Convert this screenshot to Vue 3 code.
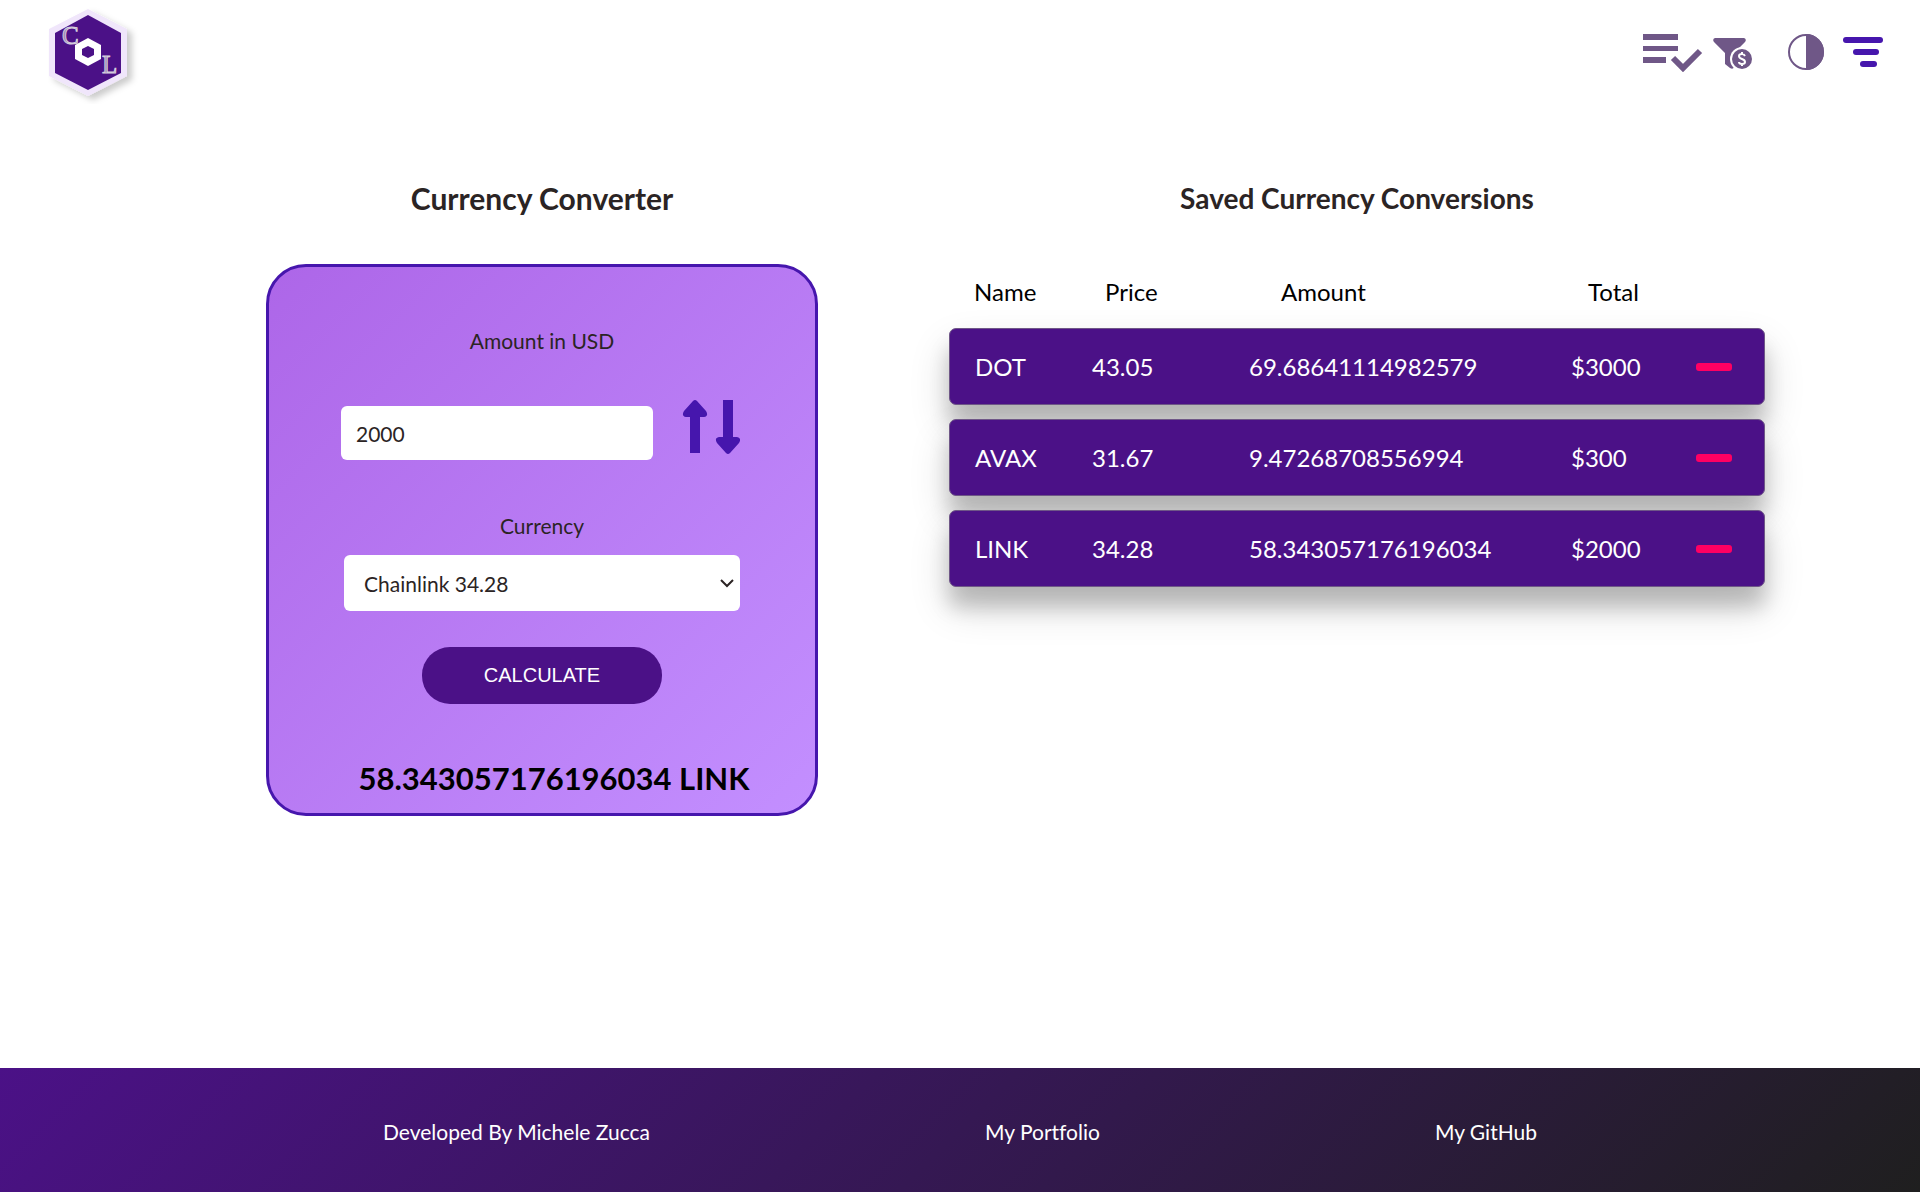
<script setup>
import { ref } from 'vue'

const amount = ref('2000')
const currency = ref('Chainlink 34.28')
const result = ref('58.343057176196034 LINK')
const conversions = ref([
  { name: 'DOT', price: '43.05', amount: '69.68641114982579', total: '$3000' },
  { name: 'AVAX', price: '31.67', amount: '9.47268708556994', total: '$300' },
  { name: 'LINK', price: '34.28', amount: '58.343057176196034', total: '$2000' },
])

function calculate() {
  const price = Number(currency.value.split(' ').pop())
  result.value = `${Number(amount.value) / price} LINK`
}

function remove(index) {
  conversions.value.splice(index, 1)
}
</script>

<template>
  <div class="page">
    <header class="topbar">
      <a href="#" class="logo" aria-label="Home">
        <svg width="94" height="104" viewBox="0 0 94 104">
          <defs>
            <filter id="logo-shadow" x="-20%" y="-20%" width="150%" height="150%">
              <feDropShadow dx="5" dy="4" stdDeviation="3" flood-color="#000" flood-opacity="0.2" />
            </filter>
          </defs>
          <polygon points="40,9 79,29 79,76 40,96 1,76 1,29" fill="#f0e6fb" filter="url(#logo-shadow)" />
          <polygon points="40,15 73,33 73,73 40,90 7,73 7,33" fill="#4b1187" />
          <polygon points="40,38 53,45 53,59 40,66 27,59 27,45" fill="#fff" />
          <polygon points="40,46 46,49 46,55 40,58 34,55 34,49" fill="#4b1187" />
          <g font-family="'Liberation Serif', serif" font-size="25" fill="#9a86b4" stroke="#d4ccdc" stroke-width="1">
            <text x="14" y="44">C</text>
            <text x="54" y="73">L</text>
          </g>
        </svg>
      </a>
      <nav class="tools" aria-label="Tools">
        <button type="button" aria-label="Saved list">
          <svg width="60" height="40" viewBox="0 0 60 40" fill="#6f5787">
            <path d="M0 2h35v6H0zM0 14h35v5H0zM0 25h23v6H0z" />
            <path d="M30 26l10 10 17-17" fill="none" stroke="#6f5787" stroke-width="6" />
          </svg>
        </button>
        <button type="button" class="filter" aria-label="Filter by price">
          <svg width="40" height="36" viewBox="0 0 40 36">
            <g transform="translate(0 4)">
              <path d="M2 0h29q3 1 1 4L21 15v14q-1 3-4 1l-5-4V15L1 4Q-1 1 2 0z" fill="#6f5787" />
              <circle cx="29" cy="21" r="12" fill="#fff" />
              <circle cx="29" cy="21" r="10" fill="#6f5787" />
              <path d="M32 18q-1-2-3-2-3 0-3 2t3 3q3 1 3 3t-3 2q-3 0-3-2M29 14v2M29 26v2" fill="none" stroke="#fff" stroke-width="2" />
            </g>
          </svg>
        </button>
        <button type="button" class="contrast" aria-label="Toggle theme">
          <svg width="36" height="36" viewBox="0 0 36 36">
            <circle cx="18" cy="18" r="17" fill="none" stroke="#6f5787" stroke-width="2" />
            <path d="M18 0a18 18 0 0 1 0 36z" fill="#6f5787" />
          </svg>
        </button>
        <button type="button" class="menu" aria-label="Menu">
          <svg width="40" height="30" viewBox="0 0 40 30" fill="#4616ad">
            <rect width="40" height="6" rx="3" />
            <rect x="10" y="12" width="26" height="6" rx="3" />
            <rect x="17" y="24" width="17" height="6" rx="3" />
          </svg>
        </button>
      </nav>
    </header>

    <main class="content">
      <section class="converter">
        <h2>Currency Converter</h2>
        <form class="card" @submit.prevent="calculate">
          <label for="amount">Amount in USD</label>
          <div class="amount-row">
            <input id="amount" v-model="amount" type="text" inputmode="decimal" />
            <button type="button" class="swap" aria-label="Swap direction">
              <svg width="58" height="58" viewBox="0 0 58 58" fill="#4616ad">
                <path d="M8 53V17H4q-5-1-2-6L11 1q2-2 4 0l9 10q3 5-2 6h-4v36z" />
                <path d="M41 0v37h-4q-5 1-2 6l9 10q2 2 4 0l9-10q3-5-2-6h-4V0z" />
              </svg>
            </button>
          </div>
          <label for="currency">Currency</label>
          <div class="select-wrap">
            <select id="currency" v-model="currency">
              <option>Chainlink 34.28</option>
            </select>
            <svg class="chevron" width="14" height="10" viewBox="0 0 14 10">
              <path d="M1 1l6 6 6-6" fill="none" stroke="#2b2424" stroke-width="2" />
            </svg>
          </div>
          <button type="submit" class="calculate">CALCULATE</button>
          <output class="result" for="amount currency">{{ result }}</output>
        </form>
      </section>

      <section class="saved">
        <h2>Saved Currency Conversions</h2>
        <table>
          <thead>
            <tr>
              <th scope="col">Name</th>
              <th scope="col">Price</th>
              <th scope="col">Amount</th>
              <th scope="col">Total</th>
            </tr>
          </thead>
          <tbody>
            <tr v-for="(row, index) in conversions" :key="row.name">
              <td>{{ row.name }}</td>
              <td>{{ row.price }}</td>
              <td>{{ row.amount }}</td>
              <td>{{ row.total }}</td>
              <td>
                <button type="button" class="remove" :aria-label="`Remove ${row.name}`" @click="remove(index)"></button>
              </td>
            </tr>
          </tbody>
        </table>
      </section>
    </main>

    <footer class="footer">
      <a href="#">Developed By Michele Zucca</a>
      <a href="#">My Portfolio</a>
      <a href="#">My GitHub</a>
    </footer>
  </div>
</template>

<style>
body {
  margin: 0;
  background: #fff;
}
</style>

<style scoped>
.page {
  min-height: 100vh;
  display: flex;
  flex-direction: column;
  font-family: Lato, sans-serif;
  font-variant-ligatures: none;
  color: #2b2424;
}

button {
  display: block;
  padding: 0;
  border: 0;
  background: none;
  cursor: pointer;
}

svg {
  display: block;
}

.topbar {
  display: flex;
  justify-content: space-between;
  align-items: center;
  height: 104px;
  padding: 0 37px 0 48px;
}

.tools {
  display: flex;
  align-items: center;
}

.filter {
  margin-left: 10px;
}

.contrast {
  margin-left: 35px;
}

.menu {
  margin-left: 19px;
}

.content {
  flex: 1;
  display: grid;
  grid-template-columns: minmax(0, 552fr) minmax(0, 816fr);
  align-items: start;
  gap: 131px;
  padding: 74px 155px 40px 266px;
}

h2 {
  margin: 0;
  text-align: center;
  font-size: 30px;
  line-height: 40px;
  font-weight: 700;
}

.saved h2 {
  font-size: 28px;
}

.card {
  box-sizing: border-box;
  display: flex;
  flex-direction: column;
  align-items: center;
  margin-top: 46px;
  padding: 60px 72px 15px;
  border: 3px solid #4616ad;
  border-radius: 40px;
  background: linear-gradient(135deg, #ad66e8, #c38fff);
}

label {
  font-size: 21px;
  line-height: 28px;
}

.amount-row {
  box-sizing: border-box;
  display: flex;
  align-items: center;
  justify-content: space-between;
  width: 100%;
  height: 54px;
  margin: 51px 0 52px;
  padding-right: 3px;
}

.amount-row input {
  box-sizing: border-box;
  width: 312px;
  height: 54px;
  padding: 0 15px;
  border: 0;
  border-radius: 6px;
  background: #fff;
  color: #2b2424;
  font: 21px Lato, sans-serif;
}

.swap {
  margin-top: -8px;
}

.select-wrap {
  position: relative;
  box-sizing: border-box;
  width: 100%;
  margin-top: 15px;
  padding: 0 3px;
}

select {
  appearance: none;
  display: block;
  width: 100%;
  height: 56px;
  padding: 0 32px 0 20px;
  border: 0;
  border-radius: 6px;
  background: #fff;
  color: #2b2424;
  font: 21px Lato, sans-serif;
}

.chevron {
  position: absolute;
  right: 9px;
  top: 24px;
  pointer-events: none;
}

.calculate {
  width: 240px;
  height: 57px;
  margin-top: 36px;
  border-radius: 28px;
  background: #4b1187;
  color: #fff;
  font: 20px "Liberation Sans", sans-serif;
}

.result {
  margin: 54px 0 0 24px;
  color: #000;
  font-size: 31px;
  line-height: 40px;
  font-weight: 700;
  white-space: nowrap;
}

table,
thead,
tbody {
  display: block;
}

thead tr,
tbody tr {
  display: grid;
  align-items: center;
}

table {
  margin-top: 59px;
  font-size: 24px;
  line-height: 30px;
}

thead tr {
  grid-template-columns: 131fr 176fr 307fr 177fr;
  padding-left: 25px;
  color: #000;
}

th,
td {
  padding: 0;
  text-align: left;
  font-weight: 400;
}

tbody {
  margin-top: 21px;
}

tbody tr {
  box-sizing: border-box;
  grid-template-columns: 117fr 157fr 322fr 125fr 36px;
  height: 77px;
  margin-bottom: 14px;
  padding: 0 32px 0 25px;
  border: 1px solid #6f5787;
  border-radius: 7px;
  background: #4b1187;
  color: #fff;
  box-shadow: 0 20px 20px rgba(0, 0, 0, 0.18), 0 20px 40px rgba(0, 0, 0, 0.16);
}

.remove {
  width: 36px;
  height: 8px;
  border-radius: 3px;
  background: #ff0062;
}

.footer {
  box-sizing: border-box;
  display: flex;
  justify-content: space-evenly;
  align-items: center;
  height: 124px;
  padding: 4px 48px 0;
  background: linear-gradient(135deg, #4b1187, #1f1f1f);
}

.footer a {
  color: #fff;
  font-size: 21px;
  line-height: 28px;
  text-decoration: none;
}
</style>
